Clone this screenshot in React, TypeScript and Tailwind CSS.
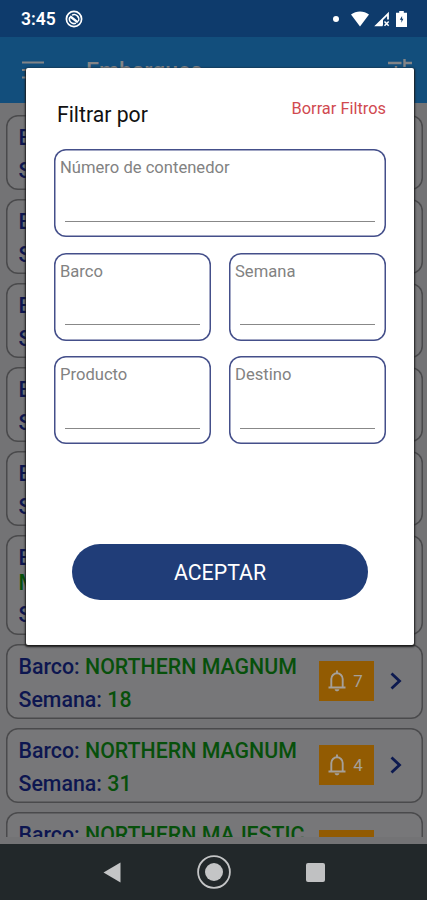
import React from "react";

type Shipment = {
	id: number;
	vessel: string;
	week: number;
	alerts: number;
};

const shipments: Shipment[] = [
	{ id: 1, vessel: "NORTHERN MAGNUM", week: 12, alerts: 3 },
	{ id: 2, vessel: "NORTHERN MAGNUM", week: 14, alerts: 5 },
	{ id: 3, vessel: "NORTHERN MAGNUM", week: 15, alerts: 2 },
	{ id: 4, vessel: "NORTHERN MAGNUM", week: 16, alerts: 6 },
	{ id: 5, vessel: "NORTHERN MAGNUM", week: 17, alerts: 1 },
	{ id: 6, vessel: "NORTHERN MAGNIFICENT", week: 20, alerts: 4 },
	{ id: 7, vessel: "NORTHERN MAGNUM", week: 18, alerts: 7 },
	{ id: 8, vessel: "NORTHERN MAGNUM", week: 31, alerts: 4 },
	{ id: 9, vessel: "NORTHERN MAJESTIC", week: 32, alerts: 2 },
];

function StatusBar() {
	return (
		<div className="flex h-[37px] shrink-0 items-center bg-[#0e3b6c] pt-px pr-5 pl-[21px] text-white">
			<span className="pt-px text-[17.5px] leading-none font-semibold">3:45</span>
			<svg className="ml-[9px]" width="18" height="18" viewBox="0 0 18 18" fill="none" stroke="currentColor">
				<circle cx="9" cy="9" r="7.6" strokeWidth="1.7" />
				<path d="M5 6.2 12.8 12.4" strokeWidth="2.4" />
				<path d="M7 5.1a4.6 4.6 0 0 1 6.3 6M11 13.1a4.6 4.6 0 0 1-6.2-6" strokeWidth="1.5" />
			</svg>
			<div className="ml-auto flex items-center">
				<span className="mr-3 h-[6px] w-[6px] rounded-full bg-white" />
				<svg className="mr-[5px]" width="18" height="16" viewBox="0 0 18 16" fill="currentColor">
					<path d="M0 3.6C5.2-.5 12.8-.5 18 3.6L9 15.6z" />
				</svg>
				<svg className="mr-[6px]" width="16" height="16" viewBox="0 0 16 16" fill="none" stroke="currentColor">
					<path d="M8.5 14.4H2.4L14 2.8V8.5" strokeWidth="1.8" />
					<path d="M9 7.5v7H3.5z" fill="currentColor" stroke="none" />
					<path d="m10.5 10.5 4.2 4.2m0-4.2-4.2 4.2" strokeWidth="1.5" />
				</svg>
				<svg width="11" height="16" viewBox="0 0 11 16">
					<path d="M3.2 0h4.6v1.8H11V16H0V1.8h3.2z" fill="currentColor" />
					<path d="M6.1 5 3.8 8.8h1.6v2.9l2-4H6.1z" fill="#0e3b6c" />
				</svg>
			</div>
		</div>
	);
}

function AppBar() {
	return (
		<div className="flex h-[66px] shrink-0 items-center bg-[#124e7c] pr-[15px] pl-[22px] text-[#828487]">
			<svg width="22" height="18" viewBox="0 0 22 18" stroke="currentColor" strokeWidth="2">
				<path d="M0 1.5h22M0 9h22M0 16.5h22" />
			</svg>
			<h1 className="ml-[42px] pt-[5px] text-[23px] font-medium">Embarques</h1>
			<svg className="ml-auto" width="24" height="24" viewBox="0 0 24 24" stroke="currentColor" strokeWidth="2.4">
				<path d="M0 5h13.5M16.5 5H24M16.5 1v8M0 12h5M10 12h14M8 8v8M0 19h14M18 19h6M16 15v8" />
			</svg>
		</div>
	);
}

function ShipmentCard({ shipment }: { shipment: Shipment }) {
	return (
		<div className="flex shrink-0 items-center rounded-[12px] bg-[#777779] pr-[21px] pl-[12.5px] shadow-[inset_0_0_0_1.5px_#4a4a4c]">
			<div className="w-[300px] shrink-0 space-y-2 pt-[11.5px] pb-[7px] text-[21.35px] leading-[24.5px] font-medium text-[#0d1650]">
				<p>
					Barco: <span className="text-[#07500b]">{shipment.vessel}</span>
				</p>
				<p>
					Semana: <span className="text-[#07500b]">{shipment.week}</span>
				</p>
			</div>
			<div className="flex h-10 w-[55px] shrink-0 items-center justify-center gap-[7px] bg-[#925b02] pr-px text-[17px] text-[#a5a09a]">
				<svg width="18" height="22" viewBox="0 0 18 22" fill="none" stroke="currentColor" strokeWidth="1.9">
					<path d="M.5 17.5h17M3.3 17V9a5.7 5.7 0 0 1 11.4 0v8M9 3.5V.5" />
					<path d="M6.6 19.2h4.8c-.4 2.8-4.4 2.8-4.8 0z" fill="currentColor" stroke="none" />
				</svg>
				{shipment.alerts}
			</div>
			<svg className="ml-auto shrink-0" width="12" height="18" viewBox="0 0 12 18" fill="none" stroke="#0d1a50" strokeWidth="2.8">
				<path d="m1.5 1.5 8 7.5-8 7.5" />
			</svg>
		</div>
	);
}

function FilterField({ label, wide = false }: { label: string; wide?: boolean }) {
	return (
		<label className={`flex h-[88px] flex-col rounded-[12px] px-[6px] pt-[7.8px] pb-[15.5px] shadow-[inset_0_0_0_1.5px_#444f8a] ${wide ? "col-span-2" : ""}`}>
			<span className="text-[16.6px] leading-[22px] text-[#828282]">{label}</span>
			<input className="mx-[5px] mt-auto h-5 border-b border-[#888] outline-none" />
		</label>
	);
}

function FilterDialog() {
	return (
		<div className="absolute top-[68px] left-[26px] flex h-[577px] w-[388px] flex-col rounded-[2px] bg-white px-7 shadow-[0_1px_2px_1px_#1c1c1c]">
			<div className="flex h-[81.2px] items-start justify-between">
				<h2 className="mt-[34px] ml-[3px] text-[21.2px] leading-[26px] text-[#111]">Filtrar por</h2>
				<button className="mt-[30px] text-[16.4px] leading-[22px] text-[#d14a50]">Borrar Filtros</button>
			</div>
			<div className="grid grid-cols-2 gap-x-[18px] gap-y-[15.6px]">
				<FilterField label="Número de contenedor" wide />
				<FilterField label="Barco" />
				<FilterField label="Semana" />
				<FilterField label="Producto" />
				<FilterField label="Destino" />
			</div>
			<button className="mx-[18px] mt-auto mb-[45.5px] h-[56px] shrink-0 rounded-full bg-[#203d78] pt-[2px] text-[21.3px] text-white">ACEPTAR</button>
		</div>
	);
}

function NavigationBar() {
	return (
		<div className="flex h-14 shrink-0 items-center justify-center gap-[75.5px] bg-[#22282a] pl-px">
			<svg width="18" height="21" viewBox="0 0 18 21" fill="#c4c5c6">
				<path d="M17.5.5v20L.5 10.5z" />
			</svg>
			<svg width="34" height="34" viewBox="0 0 34 34">
				<circle cx="17" cy="17" r="15.9" fill="none" stroke="#c4c5c6" strokeWidth="1.8" />
				<circle cx="17" cy="17" r="9" fill="#c4c5c6" />
			</svg>
			<div className="h-[19px] w-[19px] rounded-[2px] bg-[#c0c1c2]" />
		</div>
	);
}

export default function App() {
	return (
		<div className="relative flex h-[900px] w-[427px] flex-col overflow-hidden bg-[#737375] font-[Roboto,sans-serif]">
			<StatusBar />
			<AppBar />
			<div className="mb-[7px] flex min-h-0 flex-1 flex-col gap-[8.6px] overflow-hidden pt-[11.5px] pr-1 pl-[6px]">
				{shipments.map((s) => (
					<ShipmentCard key={s.id} shipment={s} />
				))}
			</div>
			<NavigationBar />
			<FilterDialog />
		</div>
	);
}
